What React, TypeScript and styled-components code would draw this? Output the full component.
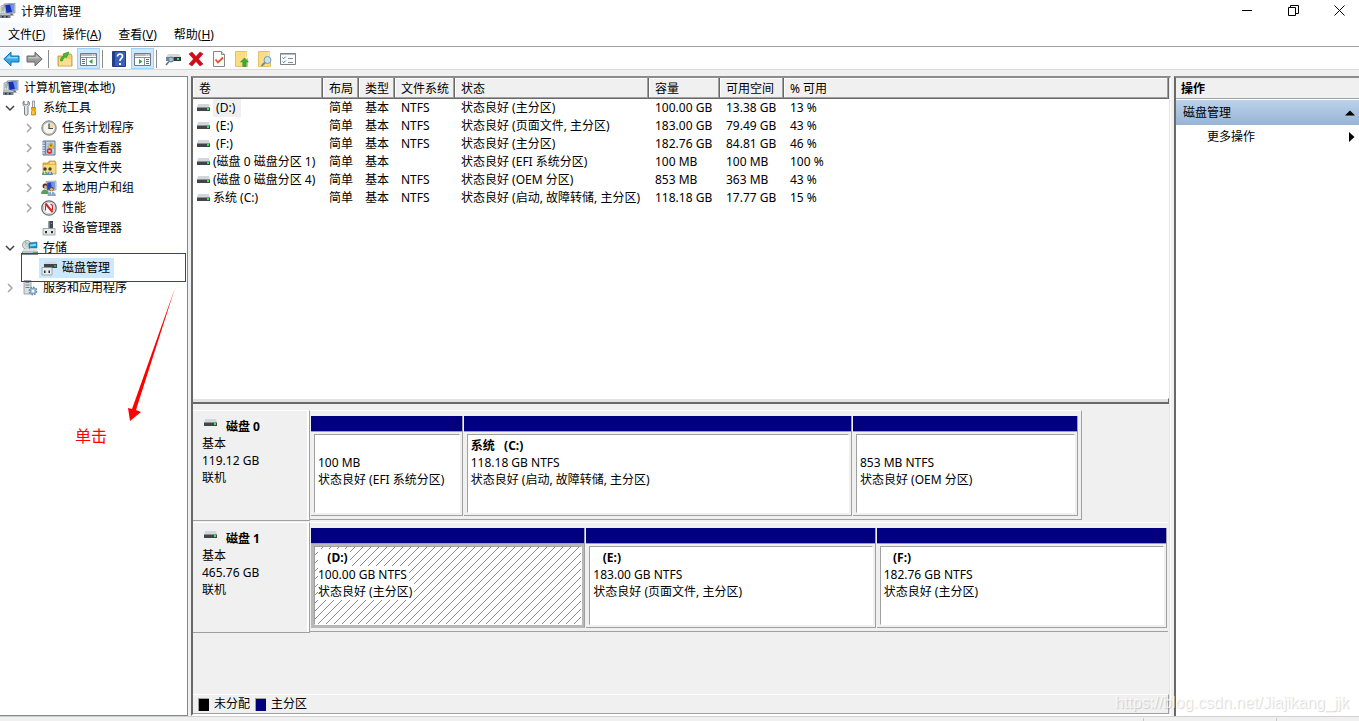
import React from 'react';
import styled, { createGlobalStyle, css } from 'styled-components';

const GlobalStyle = createGlobalStyle`
  * { box-sizing: border-box; }
  body { margin: 0; overflow: hidden; }
  body, button, table {
    font-family: "Noto Sans", "Noto Sans CJK SC", sans-serif;
    font-size: 12px;
    line-height: 18px;
    color: #000;
  }
  button { border: 0; padding: 0; background: none; }
  svg { display: block; flex: none; }
`;

const Window = styled.div`
  position: relative;
  display: flex;
  flex-direction: column;
  height: 100vh;
  background: #f0f0f0;
`;

const TitleBar = styled.header`
  display: flex;
  align-items: center;
  height: 22px;
  background: #fff;
`;

const Title = styled.h1`
  margin: 0 0 0 5px;
  padding-top: 2px;
  font-size: 12px;
  font-weight: 400;
  flex: 1;
`;

const WindowControls = styled.div`
  display: flex;
  align-self: flex-start;
  gap: 6px;
`;

const WindowButton = styled.button`
  display: grid;
  place-items: center;
  width: 40px;
  height: 21px;
`;

const MenuBar = styled.nav`
  display: flex;
  gap: 1px;
  height: 24px;
  background: #fff;
`;

const MenuButton = styled.button<{ $hot?: boolean }>`
  padding: 2px 8px 0;
  height: 24px;
  white-space: nowrap;
  background: ${p => (p.$hot ? '#f7fbff' : 'transparent')};
`;

const ToolBar = styled.div`
  display: flex;
  align-items: center;
  height: 24px;
  padding-top: 1px;
  border-top: 1px solid #a0a0a0;
  border-bottom: 1px solid #dadada;
  background: #fff;
`;

const ToolGroup = styled.div<{ $gap?: number }>`
  display: flex;
  gap: ${p => p.$gap ?? 0}px;
  & + & {
    margin-left: 2px;
    padding-left: 4px;
    border-left: 1px solid #8a8a8a;
  }
  height: 18px;
  align-items: center;
`;

const ToolButton = styled.button<{ $state?: 'hot' | 'on' }>`
  display: grid;
  place-items: center;
  width: 23px;
  height: 21px;
  ${p => p.$state === 'hot' && css`background: #f3f9ff;`}
  ${p => p.$state === 'on' && css`background: #cce8ff; border: 1px solid #99d1ff;`}
`;

const Panes = styled.div`
  display: flex;
  flex: 1;
  gap: 3px;
  min-height: 0;
  padding-top: 6px;
`;

const TreePane = styled.aside`
  position: relative;
  width: 188px;
  flex: none;
  padding-top: 1px;
  border: 1px solid #828790;
  border-left: 0;
  background: #fff;
`;

const TreeList = styled.ul`
  margin: 0;
  padding: 0;
  list-style: none;
`;

const TreeRow = styled.li<{ $level: number }>`
  display: flex;
  align-items: center;
  height: 20px;
  padding-left: ${p => (p.$level === 2 ? 22 : 3)}px;
`;

const Twisty = styled.span`
  width: 14px;
  flex: none;
  display: grid;
  place-items: center;
`;

const TreeItem = styled.span<{ $selected?: boolean }>`
  display: flex;
  align-items: center;
  gap: 5px;
  height: 20px;
  padding: 0 4px 0 2px;
  margin-left: 3px;
  white-space: nowrap;
  background: ${p => (p.$selected ? '#cce8ff' : 'transparent')};
  &:first-child { margin-left: 0; padding-left: 0; }
`;

const HighlightFrame = styled.div`
  position: absolute;
  left: 21px;
  top: 176px;
  width: 165px;
  height: 29px;
  border: 1px solid #e00000;
`;

const Pointer = styled.svg`
  position: absolute;
  left: 124px;
  top: 210px;
`;

const PointerNote = styled.div`
  position: absolute;
  left: 75px;
  top: 347px;
  font-size: 16px;
  line-height: 24px;
  color: #f00;
`;

const CenterPane = styled.main`
  display: flex;
  flex-direction: column;
  flex: 1;
  min-width: 0;
  border-style: solid;
  border-width: 2px 1px 2px 2px;
  border-color: #8c8c8c #fff #fff #696969;
  box-shadow: inset -1px 0 #e3e3e3;
`;

const VolumeArea = styled.section`
  flex: 1;
  min-height: 0;
  margin-right: 1px;
  background: #fff;
`;

const VolumeTable = styled.table`
  width: 100%;
  table-layout: fixed;
  border-collapse: separate;
  border-spacing: 0;
  th, td {
    padding: 0 0 0 6px;
    text-align: left;
    font-weight: 400;
    white-space: nowrap;
    height: 18px;
  }
  th {
    height: 21px;
    background: #f0f0f0;
    box-shadow: inset -1px -1px #696969, inset -2px -2px #a0a0a0, inset 1px 1px #fff;
  }
`;

const VolumeName = styled.span`
  display: flex;
  align-items: center;
  gap: 3px;
  margin-left: -2px;
`;

const VolumeLabel = styled.span<{ $focused?: boolean }>`
  white-space: pre;
  ${p => p.$focused && css`background: #f0f0f0; padding-right: 6px;`}
`;

const Splitter = styled.div`
  height: 6px;
  margin-right: 1px;
  border-top: 1px solid #fff;
  border-bottom: 2px solid #696969;
  border-right: 1px solid #696969;
  background: #e3e3e3;
`;

const DiskArea = styled.section`
  flex: none;
  display: flex;
  flex-direction: column;
  height: 310px;
  padding-top: 6px;
`;

const DiskRow = styled.div`
  display: flex;
  height: 111px;
  margin: 0 2px 1px 0;
`;

const DiskInfo = styled.div`
  width: 117px;
  flex: none;
  padding: 7px 0 0 9px;
  line-height: 17px;
  border-top: 1px solid #fff;
  border-bottom: 1px solid #a0a0a0;
  border-right: 1px solid #a0a0a0;
  box-shadow: inset -2px 0 #fff;
`;

const DiskName = styled.div`
  display: flex;
  gap: 9px;
  font-weight: 700;
  svg { margin-left: 2px; }
`;

const Strip = styled.div<{ $size: number; $edge?: boolean }>`
  display: flex;
  flex: ${p => p.$size} 1 0;
  min-width: 0;
  height: 110px;
  gap: 1px;
  padding: 5px ${p => (p.$edge ? 3 : 1)}px 3px 1px;
  border-top: 1px solid #fff;
  border-bottom: 1px solid #a0a0a0;
  border-right: ${p => (p.$edge ? '1px solid #a0a0a0' : '0')};
`;

const Unused = styled.div<{ $size: number }>`
  flex: ${p => p.$size} 1 0;
`;

const Partition = styled.div<{ $size: number; $selected?: boolean }>`
  display: flex;
  flex-direction: column;
  flex: ${p => p.$size} 1 0;
  min-width: 0;
  border-right: 1px solid #a0a0a0;
  border-bottom: 1px solid ${p => (p.$selected ? '#b8b8b8' : '#a0a0a0')};
  background: ${p => (p.$selected ? '#b8b8b8' : '#f0f0f0')};
`;

const PartitionBar = styled.div`
  height: 16px;
  flex: none;
  background: #000080;
  border-bottom: 1px solid #a0a0a0;
`;

const PartitionBody = styled.div`
  position: relative;
  flex: 1;
  margin: 2px 2px 2px 3px;
  padding: 2px 0 0 3px;
  line-height: 17px;
  overflow: hidden;
  white-space: pre;
  background: #fff;
  border: 1px solid #a0a0a0;
  border-right-color: #fff;
  border-bottom-color: #fff;
`;

const PartitionLine = styled.div<{ $bold?: boolean }>`
  position: relative;
  width: fit-content;
  height: 17px;
  padding-right: 2px;
  background: #fff;
  font-weight: ${p => (p.$bold ? 700 : 400)};
`;

const HatchLayer = styled.svg`
  position: absolute;
  inset: 0;
  width: 100%;
  height: 100%;
`;

const Legend = styled.div`
  display: flex;
  align-items: center;
  gap: 5px;
  height: 20px;
  margin: auto 1px 0 0;
  padding-left: 5px;
  border-top: 1px solid #fff;
  border-bottom: 1px solid #a0a0a0;
  border-right: 1px solid #a0a0a0;
`;

const Swatch = styled.span<{ $color: string }>`
  width: 11px;
  height: 13px;
  background: ${p => p.$color};
  border-top: 1px solid #a0a0a0;
  border-left: 1px solid #a0a0a0;
`;

const ActionsPane = styled.aside`
  width: 185px;
  flex: none;
  background: #fff;
  border-left: 2px solid #696969;
  border-top: 2px solid #8c8c8c;
`;

const ActionsHeader = styled.h2`
  margin: 0 0 1px;
  height: 21px;
  padding-left: 5px;
  font-size: 12px;
  line-height: 22px;
  font-weight: 700;
  background: #f0f0f0;
  border-bottom: 1px solid #a0a0a0;
`;

const ActionButton = styled.button<{ $group?: boolean }>`
  display: flex;
  align-items: center;
  justify-content: space-between;
  width: 100%;
  height: ${p => (p.$group ? 25 : 23)}px;
  padding: 0 4px 0 ${p => (p.$group ? 7 : 31)}px;
  background: ${p => (p.$group ? 'linear-gradient(#bcd2ec, #98b3d3)' : 'transparent')};
`;

const StatusBar = styled.footer`
  display: flex;
  justify-content: flex-end;
  height: 5px;
  border-top: 1px solid #d0d0d0;
`;

const StatusCell = styled.span<{ $width: number }>`
  width: ${p => p.$width}px;
  margin-top: 1px;
  border-left: 1px solid #c8c8c8;
`;

const Watermark = styled.div`
  position: absolute;
  right: 10px;
  bottom: 8px;
  font: 16px/20px "Liberation Sans", sans-serif;
  color: rgba(255, 255, 255, 0.7);
  text-shadow: 1px 1px 1px rgba(0, 0, 0, 0.16);
  pointer-events: none;
`;

const ComputerIcon = () => (
  <svg width="16" height="16" viewBox="0 0 16 16">
    <path d="M4 1l11-1v10l-9 1z" fill="#c5cad0" stroke="#727b84" strokeWidth=".6" />
    <path d="M5.2 2l8.8-.9v7.8L6.5 10z" fill="#1630b8" />
    <path d="M10 1.6l4-.5v7.8l-2 .2z" fill="#6f94ee" />
    <path d="M8 10.5h4l2 2H7z" fill="#5f6871" />
    <path d="M1 3l3-1v9H1z" fill="#d7dbdf" stroke="#7b848d" strokeWidth=".6" />
    <path d="M2 5h1.500M2 7h1.500" stroke="#65a552" />
    <path d="M0 10.500h10.500V15H0z" fill="#76828b" />
    <path d="M0 10.500h10.500v1.300H0z" fill="#cdd3d8" />
    <path d="M2 13h1.500v1.500H2zM6 13h1.500v1.500H6z" fill="#20272d" />
  </svg>
);

const ToolsIcon = () => (
  <svg width="16" height="16" viewBox="0 0 16 16">
    <path d="M2 1v3l2 1 2-1V1c2 1 2 4 0 5.500V14c0 1.800-3.500 1.800-3.500 0V6.500C.500 5 .500 2 2 1z" fill="#e3e6e8" stroke="#697279" strokeWidth=".9" />
    <path d="M10.500 1h2v7h-2z" fill="#e9eaeb" stroke="#72797f" strokeWidth=".7" />
    <path d="M9.500 7.500h4v2l-.6.700.6 1V15h-4v-3.800l.6-1-.6-.700z" fill="#f2ae15" stroke="#b27504" strokeWidth=".7" />
    <path d="M11 11v3" stroke="#ffe38c" />
  </svg>
);

const ClockIcon = () => (
  <svg width="16" height="16" viewBox="0 0 16 16">
    <circle cx="8" cy="8" r="7.200" fill="#b9bec2" stroke="#7d8388" />
    <circle cx="8" cy="8" r="5.600" fill="#faf6e9" />
    <path d="M8 8V2.400A5.600 5.600 0 0 1 13.600 8z" fill="#f2dcaa" />
    <path d="M8 3.500V8.500h4" fill="none" stroke="#3b4a59" strokeWidth="1.200" />
  </svg>
);

const EventIcon = () => (
  <svg width="16" height="16" viewBox="0 0 16 16">
    <path d="M2 1h12v14H2z" fill="#c5d5e8" stroke="#5d7398" />
    <path d="M3 1.500h2.200v13H3z" fill="#6d86ad" />
    <path d="M1 3h3M1 5.500h3M1 8h3M1 10.500h3M1 13h3" stroke="#e2e7ec" />
    <path d="M6.500 4h6M6.500 6h6M6.500 8h6M6.500 13h6" stroke="#768aa2" strokeWidth=".6" />
    <path d="M10 2.500l3.200 5.500H6.800z" fill="#ffcd26" stroke="#c38b00" strokeWidth=".5" />
    <path d="M10 4.500v2" stroke="#222" />
    <circle cx="8.500" cy="11" r="2.700" fill="#d32d2d" />
    <path d="M7.500 10l2 2m0-2l-2 2" stroke="#fff" strokeWidth=".8" />
  </svg>
);

const SharedFolderIcon = () => (
  <svg width="16" height="16" viewBox="0 0 16 16">
    <path d="M2 3h5l1-2h6l1 2v11H2z" fill="#e4b640" stroke="#b98d26" strokeWidth=".7" />
    <path d="M2.500 5h12v8.500h-12z" fill="#f6dc81" />
    <path d="M9 3h4.500" stroke="#fff" />
    <circle cx="4" cy="9" r="1.700" fill="#4b3528" />
    <circle cx="9" cy="9" r="1.700" fill="#5d3c2a" />
    <path d="M1 15c0-5 5.500-5 6 0z" fill="#58a16a" />
    <path d="M6.500 15c0-5 5-5 5.500 0z" fill="#5a8bc3" />
    <path d="M3.500 11l.500 3M9 11v3" stroke="#f4f4f4" />
  </svg>
);

const UsersIcon = () => (
  <svg width="16" height="16" viewBox="0 0 16 16">
    <path d="M5 1.500L15 1v9l-9 1z" fill="#dce3e9" stroke="#717a84" strokeWidth=".6" />
    <path d="M6.200 2.500L14 2v7l-7.800 1z" fill="#1f42c0" />
    <path d="M10 2.200l4-.200v7l-3 .400z" fill="#7197eb" />
    <circle cx="4" cy="6" r="2.500" fill="#4b3428" />
    <circle cx="4.500" cy="6.700" r="1.500" fill="#dfac83" />
    <path d="M0 14c0-6 7.500-6 8 0z" fill="#5b9f5d" />
    <circle cx="10.500" cy="9" r="2.300" fill="#79502c" />
    <circle cx="10.500" cy="9.600" r="1.400" fill="#e9bd95" />
    <path d="M6.500 16c0-6 8-6 8.500 0z" fill="#87a7ce" />
    <path d="M10 11.500l.500 4 .7-4z" fill="#fff" />
  </svg>
);

const PerformanceIcon = () => (
  <svg width="16" height="16" viewBox="0 0 16 16">
    <circle cx="8" cy="8" r="7.200" fill="#fff" stroke="#62686d" strokeWidth="1.300" />
    <circle cx="8" cy="8" r="5.600" fill="none" stroke="#adb3b7" strokeWidth=".7" />
    <path d="M4.500 10.500V6.500l1-2M11.500 10V5.500l-2-1.500" fill="none" stroke="#be2727" strokeWidth="1.200" />
    <path d="M4.500 3.500L11.500 12" stroke="#d42020" strokeWidth="2" />
  </svg>
);

const DeviceIcon = () => (
  <svg width="16" height="16" viewBox="0 0 16 16">
    <path d="M7 1h5v8H7z" fill="#424a50" />
    <path d="M7 1h1.500v8H7z" fill="#9aa2a8" />
    <path d="M10 3h1v1h-1z" fill="#49d067" />
    <path d="M2 8.500h12V15H2z" fill="#e5e8ea" stroke="#93999d" strokeWidth=".8" />
    <path d="M4 11h2v2.200H4zM10 11h2v2.200h-2z" fill="#2b3034" />
  </svg>
);

const StorageIcon = () => (
  <svg width="16" height="16" viewBox="0 0 16 16">
    <circle cx="5" cy="5" r="4.500" fill="#d5dedc" stroke="#87918f" strokeWidth=".8" />
    <path d="M5 5L2 1.800l2-1.200z" fill="#85c49c" />
    <circle cx="5" cy="5" r="1.300" fill="#fff" stroke="#858c90" strokeWidth=".6" />
    <path d="M7 3l8-1v6H7z" fill="#1694ca" stroke="#37667e" strokeWidth=".6" />
    <path d="M8 4.500l6-.800v2L8 6.500z" fill="#7edaf6" />
    <path d="M1 9h14v2.500H1z" fill="#dce1e4" />
    <path d="M0 11.500h16V15H0z" fill="#858c91" />
    <path d="M1 12.500h10" stroke="#c3c9cd" />
    <path d="M12 12.500h2v1.500h-2z" fill="#48e071" />
  </svg>
);

const DiskManagementIcon = () => (
  <svg width="16" height="16" viewBox="0 0 16 16">
    <path d="M4 1.500h11l1 3H3z" fill="#d5d8da" />
    <path d="M3 4h13v4H3z" fill="#3e4448" />
    <path d="M13 5.500h2v1h-2z" fill="#51de72" />
    <path d="M1 7.500h10V15H1z" fill="#eaedee" stroke="#8e9599" strokeWidth=".8" />
    <path d="M3 10.500h1.500V13H3zM7.500 10.500H9V13H7.500z" fill="#25292c" />
  </svg>
);

const ServicesIcon = () => (
  <svg width="16" height="16" viewBox="0 0 16 16">
    <path d="M2 .5h7V14H2z" fill="#d9dee2" stroke="#89949c" strokeWidth=".8" />
    <path d="M3.500 2.500h4M3.500 5h4M3.500 7.500h4" stroke="#77838b" />
    <circle cx="11" cy="11" r="3.400" fill="#b9d3e6" stroke="#668ba7" strokeWidth="2" strokeDasharray="1.600 1" />
    <circle cx="11" cy="11" r="2.800" fill="#a8c8df" stroke="#7fa3bd" />
    <circle cx="11" cy="11" r="1.200" fill="#fff" />
  </svg>
);

const DriveIcon = () => (
  <svg width="13" height="10" viewBox="0 0 13 10">
    <path d="M1 1h11l1 4H0z" fill="#d3d7db" />
    <path d="M0 4.500h13V8H0z" fill="#3f4549" />
    <path d="M0 4.500h13" stroke="#8b9093" />
    <path d="M10 5h2v2h-2z" fill="#2bf04a" />
  </svg>
);

const Chevron = ({ open }: { open?: boolean }) => (
  <svg width="10" height="10" viewBox="0 0 10 10">
    <path
      d={open ? 'M1 3l4 4 4-4' : 'M3 1l4 4-4 4'}
      fill="none"
      stroke={open ? '#404040' : '#a6a6a6'}
      strokeWidth="1.500"
    />
  </svg>
);

const ArrowIcon = ({ forward }: { forward?: boolean }) => (
  <svg width="17" height="16" viewBox="0 0 16 16">
    <g transform={forward ? 'translate(16 0) scale(-1 1)' : undefined}>
      <path
        d="M.3 8L7.500 1.200V5H15.500v6H7.500v3.800z"
        fill={forward ? '#9b9b9b' : '#35a8e5'}
        stroke={forward ? '#666' : '#166fae'}
      />
      <path d="M2.500 7.500L6.500 3.800V6H14.300v1.500z" fill={forward ? '#c1c1c1' : '#8bd5f7'} />
    </g>
  </svg>
);

const ParentFolderIcon = () => (
  <svg width="16" height="16" viewBox="0 0 16 16">
    <path d="M1 5h6l1-2h6l1 2v10H1z" fill="#efcf70" stroke="#b98e32" strokeWidth=".8" />
    <path d="M2 8h12v6.500H2z" fill="#f8df91" />
    <path d="M3.500 10c0-3 1-4.500 3.500-5L6 3l6-2-2.500 5.500L8.500 6C7 6.500 6 7.500 5.500 10z" fill="#49b936" stroke="#258417" strokeWidth=".6" />
  </svg>
);

const PaneIcon = ({ right }: { right?: boolean }) => (
  <svg width="17" height="16" viewBox="0 0 17 16">
    <path d="M.5 2.500h16v12H.5z" fill="#fff" stroke="#737b84" />
    <path d="M1 3h15v2H1z" fill="#b5bbc2" />
    <path d="M12 4h1m1 0h1" stroke="#fff" />
    <path d="M1 6.500h15" stroke="#88919b" />
    <path d={right ? 'M10.500 7v7' : 'M6.500 7v7'} stroke="#88919b" />
    <path d={right ? 'M12 8.500h3m-3 2h3m-3 2h3' : 'M2 8.500h3m-3 2h3m-3 2h3'} stroke="#596c84" />
    <path d={right ? 'M5 8l3.500 2.500L5 13z' : 'M12.500 8L9 10.500l3.500 2.500z'} fill="#2faa35" />
  </svg>
);

const HelpIcon = () => (
  <svg width="14" height="16" viewBox="0 0 14 16">
    <path d="M.5.500h13v15H.5z" fill="#3760ba" stroke="#263c86" />
    <path d="M1 1h2v14H1z" fill="#213c8a" />
    <path d="M5.500 5.500c0-3.500 5-3 5-.300 0 2.300-2.500 2.200-2.500 4.800" fill="none" stroke="#fff" strokeWidth="1.700" />
    <path d="M7 12h2v2H7z" fill="#fff" />
  </svg>
);

const ConnectIcon = () => (
  <svg width="16" height="16" viewBox="0 0 16 16">
    <path d="M3 3h11l2 3H1z" fill="#d3d7da" />
    <path d="M1 6h15v4H1z" fill="#7d8489" />
    <path d="M9 6h7v4H9z" fill="#32383c" />
    <path d="M12 7h2v2h-2z" fill="#45dc63" />
    <circle cx="6" cy="8.500" r="2.500" fill="#9dc2db" stroke="#60798b" />
    <path d="M4 10.500L1 14" stroke="#596d7c" strokeWidth="1.500" />
  </svg>
);

const DeleteIcon = () => (
  <svg width="16" height="16" viewBox="0 0 16 16">
    <path d="M1 3l3-2 4 4.500L12 1l3 2-4.500 5L15 13l-3 2-4-4.500L4 15l-3-2 4.500-5z" fill="#d40a16" stroke="#a5000a" strokeWidth=".5" />
  </svg>
);

const CheckDocIcon = () => (
  <svg width="14" height="16" viewBox="0 0 14 16">
    <path d="M1.500.500h8l3 3v12h-11z" fill="#fafafa" stroke="#868686" />
    <path d="M9.500.500v3h3" fill="#ddd" stroke="#868686" />
    <path d="M3.500 8.500l2.500 3 5-5" fill="none" stroke="#e65328" strokeWidth="1.800" />
  </svg>
);

const FolderActionIcon = ({ search }: { search?: boolean }) => (
  <svg width="16" height="16" viewBox="0 0 16 16">
    <path d="M1.500.500h11v6l1 1v8h-12z" fill="#fbdc80" stroke="#e2bf68" />
    <path d="M12 1v6h1" fill="none" stroke="#fff3c5" />
    {search ? (
      <>
        <circle cx="10.500" cy="9" r="3.500" fill="#c3e3f2" stroke="#7a9caf" />
        <path d="M8 11.500L4.500 15" stroke="#788691" strokeWidth="1.800" />
      </>
    ) : (
      <path d="M10.500 7l4 4h-2.300v4.500H8.800V11H6.500z" fill="#3cac35" stroke="#23871c" strokeWidth=".5" />
    )}
  </svg>
);

const ChecklistIcon = () => (
  <svg width="16" height="16" viewBox="0 0 16 16">
    <path d="M.5 2.500h15v11H.5z" fill="#fbfbfb" stroke="#7b8086" />
    <path d="M1 3h14v1H1z" fill="#b9bec4" />
    <path d="M2.500 6.500l1.200 1.200 2-2M2.500 10.500l1.200 1.200 2-2" fill="none" stroke="#367abc" />
    <path d="M8 7.500h5M8 11.500h5" stroke="#888f96" />
  </svg>
);

type TreeEntry = {
  level: number;
  label: string;
  icon: React.ReactNode;
  state?: 'open' | 'closed';
  selected?: boolean;
};

const tree: TreeEntry[] = [
  { level: 0, label: '计算机管理(本地)', icon: <ComputerIcon /> },
  { level: 1, label: '系统工具', icon: <ToolsIcon />, state: 'open' },
  { level: 2, label: '任务计划程序', icon: <ClockIcon />, state: 'closed' },
  { level: 2, label: '事件查看器', icon: <EventIcon />, state: 'closed' },
  { level: 2, label: '共享文件夹', icon: <SharedFolderIcon />, state: 'closed' },
  { level: 2, label: '本地用户和组', icon: <UsersIcon />, state: 'closed' },
  { level: 2, label: '性能', icon: <PerformanceIcon />, state: 'closed' },
  { level: 2, label: '设备管理器', icon: <DeviceIcon /> },
  { level: 1, label: '存储', icon: <StorageIcon />, state: 'open' },
  { level: 2, label: '磁盘管理', icon: <DiskManagementIcon />, selected: true },
  { level: 1, label: '服务和应用程序', icon: <ServicesIcon />, state: 'closed' },
];

const columns: [string, number | undefined][] = [
  ['卷', 130],
  ['布局', 36],
  ['类型', 36],
  ['文件系统', 60],
  ['状态', 194],
  ['容量', 71],
  ['可用空间', 64],
  ['% 可用', undefined],
];

const volumes = [
  [' (D:)', '简单', '基本', 'NTFS', '状态良好 (主分区)', '100.00 GB', '13.38 GB', '13 %'],
  [' (E:)', '简单', '基本', 'NTFS', '状态良好 (页面文件, 主分区)', '183.00 GB', '79.49 GB', '43 %'],
  [' (F:)', '简单', '基本', 'NTFS', '状态良好 (主分区)', '182.76 GB', '84.81 GB', '46 %'],
  ['(磁盘 0 磁盘分区 1)', '简单', '基本', '', '状态良好 (EFI 系统分区)', '100 MB', '100 MB', '100 %'],
  ['(磁盘 0 磁盘分区 4)', '简单', '基本', 'NTFS', '状态良好 (OEM 分区)', '853 MB', '363 MB', '43 %'],
  ['系统 (C:)', '简单', '基本', 'NTFS', '状态良好 (启动, 故障转储, 主分区)', '118.18 GB', '17.77 GB', '15 %'],
];

const disks = [
  {
    name: '磁盘 0',
    capacity: '119.12 GB',
    size: 771,
    unused: 87,
    partitions: [
      { name: '', info: '100 MB', status: '状态良好 (EFI 系统分区)', size: 151 },
      { name: '系统   (C:)', info: '118.18 GB NTFS', status: '状态良好 (启动, 故障转储, 主分区)', size: 388 },
      { name: '', info: '853 MB NTFS', status: '状态良好 (OEM 分区)', size: 224 },
    ],
  },
  {
    name: '磁盘 1',
    capacity: '465.76 GB',
    size: 858,
    unused: 0,
    partitions: [
      { name: '   (D:)', info: '100.00 GB NTFS', status: '状态良好 (主分区)', size: 274, selected: true },
      { name: '   (E:)', info: '183.00 GB NTFS', status: '状态良好 (页面文件, 主分区)', size: 289 },
      { name: '   (F:)', info: '182.76 GB NTFS', status: '状态良好 (主分区)', size: 290 },
    ],
  },
];

const Hatch = () => (
  <HatchLayer aria-hidden="true">
    <defs>
      <pattern id="hatch" width="8" height="8" patternUnits="userSpaceOnUse">
        <path d="M-1 9L9-1M-1 1l2-2M7 9l2-2" stroke="#8c8c8c" strokeWidth="1" />
      </pattern>
    </defs>
    <rect width="100%" height="100%" fill="url(#hatch)" />
  </HatchLayer>
);

export default function App() {
  return (
    <Window>
      <GlobalStyle />
      <TitleBar>
        <ComputerIcon />
        <Title>计算机管理</Title>
        <WindowControls>
          <WindowButton aria-label="最小化">
            <svg width="11" height="11"><path d="M0 5.500h10" stroke="#000" /></svg>
          </WindowButton>
          <WindowButton aria-label="还原">
            <svg width="11" height="11">
              <path d="M.5 2.500h7v8h-7zM2.500 2.500v-2h8v8h-3" fill="none" stroke="#000" />
            </svg>
          </WindowButton>
          <WindowButton aria-label="关闭">
            <svg width="11" height="11"><path d="M.5.500l10 10m0-10l-10 10" stroke="#000" /></svg>
          </WindowButton>
        </WindowControls>
      </TitleBar>
      <MenuBar>
        <MenuButton $hot>文件(<u>F</u>)</MenuButton>
        <MenuButton>操作(<u>A</u>)</MenuButton>
        <MenuButton>查看(<u>V</u>)</MenuButton>
        <MenuButton>帮助(<u>H</u>)</MenuButton>
      </MenuBar>
      <ToolBar>
        <ToolGroup>
          <ToolButton $state="hot" aria-label="后退"><ArrowIcon /></ToolButton>
          <ToolButton aria-label="前进"><ArrowIcon forward /></ToolButton>
        </ToolGroup>
        <ToolGroup $gap={1}>
          <ToolButton aria-label="上一级"><ParentFolderIcon /></ToolButton>
          <ToolButton $state="on" aria-label="显示控制台树"><PaneIcon /></ToolButton>
        </ToolGroup>
        <ToolGroup $gap={1}>
          <ToolButton aria-label="帮助"><HelpIcon /></ToolButton>
          <ToolButton $state="on" aria-label="显示操作窗格"><PaneIcon right /></ToolButton>
        </ToolGroup>
        <ToolGroup>
          <ToolButton aria-label="连接"><ConnectIcon /></ToolButton>
          <ToolButton aria-label="删除"><DeleteIcon /></ToolButton>
          <ToolButton aria-label="属性"><CheckDocIcon /></ToolButton>
          <ToolButton aria-label="打开"><FolderActionIcon /></ToolButton>
          <ToolButton aria-label="浏览"><FolderActionIcon search /></ToolButton>
          <ToolButton aria-label="设置"><ChecklistIcon /></ToolButton>
        </ToolGroup>
      </ToolBar>
      <Panes>
        <TreePane>
          <TreeList>
            {tree.map(item => (
              <TreeRow key={item.label} $level={item.level}>
                {item.level > 0 && <Twisty>{item.state && <Chevron open={item.state === 'open'} />}</Twisty>}
                <TreeItem $selected={item.selected}>{item.icon}{item.label}</TreeItem>
              </TreeRow>
            ))}
          </TreeList>
          <HighlightFrame />
          <Pointer width="54" height="136" viewBox="0 0 54 136">
            <path d="M51 1L12 123l5 2-11 9-2-13 4 1z" fill="#f00" />
          </Pointer>
          <PointerNote>单击</PointerNote>
        </TreePane>
        <CenterPane>
          <VolumeArea>
            <VolumeTable>
              <colgroup>
                {columns.map(([label, width]) => <col key={label} width={width} />)}
              </colgroup>
              <thead>
                <tr>{columns.map(([label]) => <th key={label} scope="col">{label}</th>)}</tr>
              </thead>
              <tbody>
                {volumes.map(([name, ...cells], row) => (
                  <tr key={name}>
                    <td>
                      <VolumeName>
                        <DriveIcon />
                        <VolumeLabel $focused={row === 0}>{name}</VolumeLabel>
                      </VolumeName>
                    </td>
                    {cells.map((cell, i) => <td key={i}>{cell}</td>)}
                  </tr>
                ))}
              </tbody>
            </VolumeTable>
          </VolumeArea>
          <Splitter />
          <DiskArea>
            {disks.map(disk => (
              <DiskRow key={disk.name}>
                <DiskInfo>
                  <DiskName><DriveIcon />{disk.name}</DiskName>
                  <div>基本</div>
                  <div>{disk.capacity}</div>
                  <div>联机</div>
                </DiskInfo>
                <Strip $size={disk.size} $edge={disk.unused > 0}>
                  {disk.partitions.map(part => (
                    <Partition key={part.status + part.name} $size={part.size} $selected={part.selected}>
                      <PartitionBar />
                      <PartitionBody>
                        {part.selected && <Hatch />}
                        <PartitionLine $bold>{part.name}</PartitionLine>
                        <PartitionLine>{part.info}</PartitionLine>
                        <PartitionLine>{part.status}</PartitionLine>
                      </PartitionBody>
                    </Partition>
                  ))}
                </Strip>
                {disk.unused > 0 && <Unused $size={disk.unused} />}
              </DiskRow>
            ))}
            <Legend>
              <Swatch $color="#000" />未分配
              <Swatch $color="#000080" />主分区
            </Legend>
          </DiskArea>
        </CenterPane>
        <ActionsPane>
          <ActionsHeader>操作</ActionsHeader>
          <ActionButton $group>
            磁盘管理
            <svg width="10" height="6"><path d="M0 5.500L5 .500l5 5z" /></svg>
          </ActionButton>
          <ActionButton>
            更多操作
            <svg width="6" height="10"><path d="M0 0l5.500 5L0 10z" /></svg>
          </ActionButton>
        </ActionsPane>
      </Panes>
      <StatusBar>
        <StatusCell $width={133} />
        <StatusCell $width={83} />
      </StatusBar>
      <Watermark>https://blog.csdn.net/Jiajikang_jjk</Watermark>
    </Window>
  );
}
